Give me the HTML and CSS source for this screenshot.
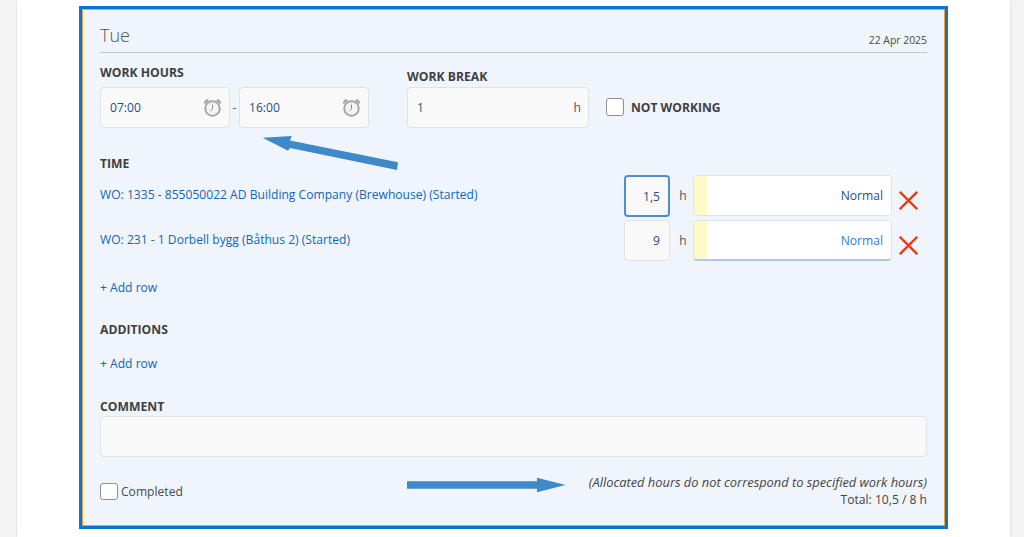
FILE: index.html
```html
<!DOCTYPE html>
<html lang="en">
<head>
<meta charset="utf-8">
<title>Tue</title>
<link rel="stylesheet" href="styles.css">
</head>
<body>
<svg width="0" height="0" class="defs">
  <symbol id="clock" viewBox="0 0 19 19">
    <circle cx="9.500" cy="10.500" r="7.300" fill="#f6f6f6" stroke="#a2a2a2" stroke-width="1.800"/>
    <path d="M9.500 4.800v1.200M9.500 15v1.200M3.800 10.500H5M14 10.500h1.200M6.600 5.600l.5.900M12.400 5.600l-.5.900M6.600 15.400l.5-.9M12.400 15.400l-.5-.9" stroke="#c4c4c4" stroke-width=".8"/>
    <path d="M9.500 6.500v4.300l-2.200 2.300" fill="none" stroke="#8f8f8f" stroke-width="1"/>
    <path d="M.6 4.400 3.500.9 6 2.300 1.900 6zM18.400 4.400 15.500.9 13 2.300 17.100 6z" fill="#a2a2a2"/>
  </symbol>
  <symbol id="cross" viewBox="0 0 19 19">
    <path d="M.8.800 18.200 18.200M18.200.800.8 18.200" fill="none" stroke="#e63c14" stroke-width="2.300"/>
  </symbol>
</svg>
<main class="page">
  <section class="card">
    <header class="head">
      <h1 class="day">Tue</h1>
      <span class="date">22 Apr 2025</span>
    </header>

    <div class="top">
      <div class="hours">
        <label class="label">WORK HOURS</label>
        <div class="hours-row">
          <div class="field time"><span>07:00</span><svg class="clock"><use href="#clock"/></svg></div>
          <span class="dash">-</span>
          <div class="field time"><span>16:00</span><svg class="clock"><use href="#clock"/></svg></div>
        </div>
      </div>
      <div class="break">
        <label class="label">WORK BREAK</label>
        <div class="field brk"><span>1</span><span class="unit">h</span></div>
      </div>
      <div class="notworking">
        <span class="check"></span>
        <span class="nw-text">NOT WORKING</span>
      </div>
    </div>

    <h2 class="label time-title">TIME</h2>
    <div class="row row-1">
      <a class="wo">WO: 1335 - 855050022 AD Building Company (Brewhouse) (Started)</a>
      <div class="qty focus">1,5</div>
      <span class="h">h</span>
      <div class="type"><i class="swatch"></i><span>Normal</span></div>
      <svg class="cross"><use href="#cross"/></svg>
    </div>
    <div class="row row-2">
      <a class="wo">WO: 231 - 1 Dorbell bygg (Båthus 2) (Started)</a>
      <div class="qty">9</div>
      <span class="h">h</span>
      <div class="type hover"><i class="swatch"></i><span>Normal</span></div>
      <svg class="cross"><use href="#cross"/></svg>
    </div>
    <a class="add add-1">+ Add row</a>

    <h2 class="label additions">ADDITIONS</h2>
    <a class="add add-2">+ Add row</a>

    <h2 class="label comment-title">COMMENT</h2>
    <div class="comment"></div>

    <footer class="foot">
      <div class="completed"><span class="check"></span><span>Completed</span></div>
      <div class="summary">
        <em class="note">(Allocated hours do not correspond to specified work hours)</em>
        <span class="total">Total: 10,5 / 8 h</span>
      </div>
    </footer>

    <svg class="arrow arrow-1" width="140" height="38" viewBox="0 0 140 38"><path d="M2.700 3.700 31.700 2 30 6.500 138 28.300 137 36 30 14 28 16.700z" fill="#3f88c9"/></svg>
    <svg class="arrow arrow-2" width="160" height="16" viewBox="0 0 160 16"><path d="M0 4.200H130V.8L158.500 8 130 15.200V11.800H0z" fill="#3f88c9"/></svg>
  </section>
</main>
</body>
</html>
```
FILE: styles.css
```css
* { box-sizing: border-box; }
html, body { margin: 0; height: 100%; }
body {
  background: #f3f3f3;
  font-family: "Open Sans", "Noto Sans", sans-serif;
  font-size: 12.100px;
  color: #444;
  overflow: hidden;
}
.defs { position: absolute; }
.page {
  width: 993px;
  height: 537px;
  margin-left: 17px;
  padding: 6px 0 0 62px;
  background: #fff;
  box-shadow: 0 0 2px rgba(0, 0, 0, .15);
}
.card {
  position: relative;
  width: 869px;
  height: 523px;
  padding: 12px 18px 0;
  background: #f0f5fc;
  border: 3px solid #0b74d1;
  box-shadow: inset 0 0 0 1px #f2a22e;
}
.head {
  display: flex;
  justify-content: space-between;
  align-items: flex-end;
  height: 32px;
  border-bottom: 1px solid #c3c7cc;
}
.day { margin: 0 0 4px; font-size: 18px; font-weight: 300; line-height: 25px; color: #555; }
.date { font-size: 10.400px; line-height: 14px; margin-bottom: 5px; color: #4a4a4a; }
.label { display: block; margin: 0; font-size: 12.200px; font-weight: 700; line-height: 16px; color: #3f3f3f; }
.top { display: flex; margin-top: 12px; }
.hours { width: 307px; }
.hours-row { display: flex; align-items: center; margin-top: 6px; }
.field {
  display: flex;
  align-items: center;
  justify-content: space-between;
  height: 41px;
  background: #f9f9f9;
  border: 1px solid #dfe2e6;
  border-radius: 4px;
  color: #1d4f7c;
  padding: 0 7px 0 9px;
}
.time { width: 130px; }
.clock { width: 19px; height: 19px; }
.dash { width: 9px; text-align: center; font-size: 12px; color: #555; }
.break { width: 182px; padding-top: 4px; }
.brk { margin-top: 2px; }
.unit { color: #555; }
.notworking { display: flex; align-items: center; gap: 7px; margin: 33px 0 0 17px; height: 18px; }
.check {
  display: block;
  width: 18px;
  height: 18px;
  background: #fff;
  border: 1px solid #8e8e8e;
  border-radius: 3px;
}
.nw-text { font-weight: 700; color: #3f3f3f; }
.time-title { margin-top: 28px; }
.row {
  display: flex;
  align-items: flex-start;
}
.row-1 { margin-top: 3px; }
.row-2 { margin-top: 3px; }
.wo { width: 524px; margin-top: 10px; color: #0f66b8; line-height: 20px; white-space: nowrap; }
.qty {
  display: flex;
  align-items: center;
  justify-content: flex-end;
  width: 46px;
  height: 41px;
  padding-right: 9px;
  background: #f9f9f9;
  border: 1px solid #dfe2e6;
  border-radius: 4px;
  color: #1d4f7c;
}
.qty.focus { height: 42px; border: 2px solid #4c8fcc; padding-right: 8px; }
.h { width: 23px; padding-left: 3px; line-height: 41px; text-align: center; color: #555; }
.type {
  position: relative;
  display: flex;
  align-items: center;
  justify-content: flex-end;
  width: 199px;
  height: 41px;
  padding: 0 8px 0 14px;
  background: #fff;
  border: 1px solid #dfe2e6;
  border-radius: 4px;
  color: #1d4f7c;
  overflow: hidden;
}
.type.hover { color: #2b7fd0; border-bottom: 2px solid #b4c8e0; }
.swatch { position: absolute; left: 0; top: 0; bottom: 0; width: 13px; background: #fdf9c8; }
.cross { width: 19px; height: 19px; margin: 16px 0 0 7px; }
.add { display: block; color: #0f66b8; line-height: 16px; }
.add-1 { margin-top: 19px; }
.additions { margin-top: 26px; }
.add-2 { margin-top: 18px; }
.comment-title { margin-top: 27px; }
.comment {
  height: 41px;
  margin-top: 1px;
  background: #f9f9f9;
  border: 1px solid #dfe2e6;
  border-radius: 4px;
}
.foot { display: flex; justify-content: space-between; align-items: flex-start; margin-top: 16px; }
.completed { display: flex; align-items: center; gap: 3px; margin-top: 10px; color: #4a4a4a; }
.completed .check { height: 17px; }
.summary { display: flex; flex-direction: column; align-items: flex-end; padding-top: 1px; line-height: 17px; color: #444; }
.note { font-size: 12.850px; }
.arrow { position: absolute; }
.arrow-1 { left: 178px; top: 125px; }
.arrow-2 { left: 325px; top: 468px; }
```
